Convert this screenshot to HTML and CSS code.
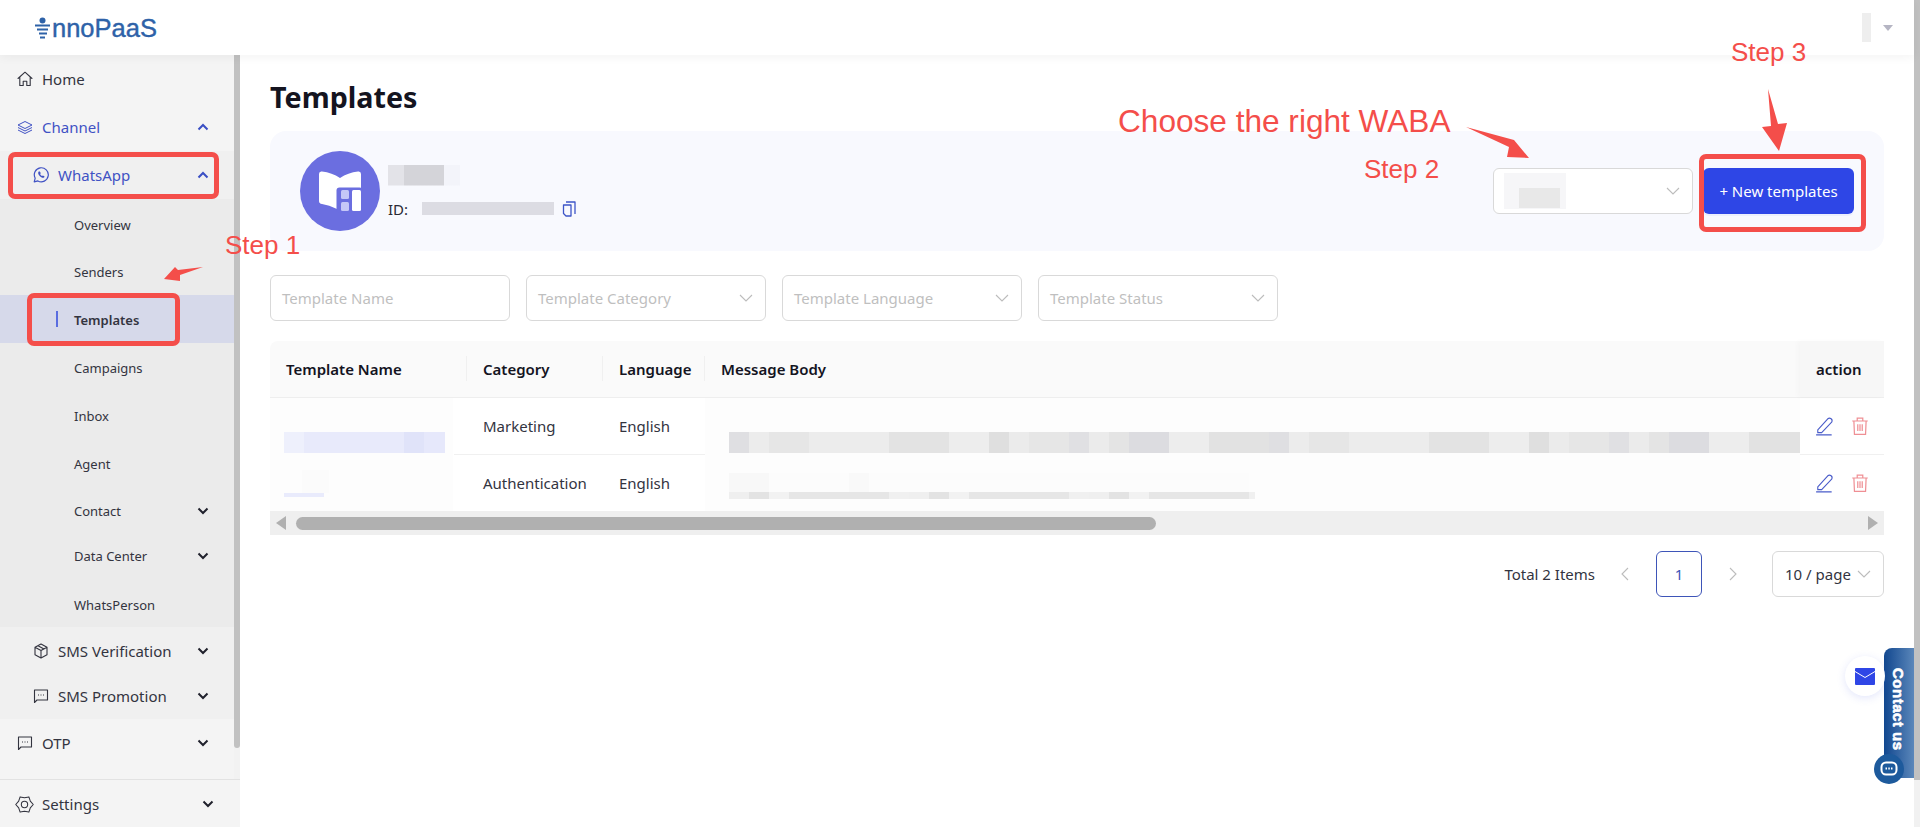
FILE: index.html
```html
<!DOCTYPE html>
<html lang="en">
<head>
<meta charset="utf-8">
<title>Templates</title>
<link rel="stylesheet" href="styles.css">
</head>
<body>
<div class="app">
  <header class="topbar">
    <div class="logo">
      <svg class="logo-mark" width="16" height="24" viewBox="0 0 16 24"><circle cx="7.500" cy="3.500" r="3" fill="#2e62a8"/><path d="M0 8.500h15M2 12.500h11M4 16.500h8M5 20.500h5" stroke="#2e62a8" stroke-width="2" fill="none"/></svg>
      <span class="logo-text">nnoPaaS</span>
    </div>
    <div class="user">
      <span class="user-blur"></span>
      <span class="caret"></span>
    </div>
  </header>
  <div class="below">
    <aside class="side">
      <div class="side-scroll">
        <nav class="menu">
          <a class="item">
            <svg class="ico" viewBox="0 0 16 16"><path d="M1 7.500 8 1.200l7 6.300M2.800 6.200v8.300h3.400v-4.300h3.600v4.300h3.400V6.200" fill="none" stroke="currentColor" stroke-width="1.100" stroke-linejoin="round" stroke-linecap="round"/></svg>
            <span>Home</span>
          </a>
          <a class="item blue">
            <svg class="ico" viewBox="0 0 16 16"><path d="M8 2.500 15 6 8 9.500 1 6z M1 8.500 8 12l7-3.500M1 11l7 3.500 7-3.500" fill="none" stroke="currentColor" stroke-width="1" stroke-linejoin="round"/></svg>
            <span>Channel</span>
            <svg class="chev up" viewBox="0 0 12 8"><path d="M1.500 6.500 6 2l4.500 4.500"/></svg>
          </a>
          <div class="group">
            <a class="item lvl2 blue">
              <svg class="ico" viewBox="0 0 16 16"><path d="M1.200 14.800 2.200 11.200A7 7 0 1 1 4.900 13.900z" fill="none" stroke="currentColor" stroke-width="1.200" stroke-linejoin="round"/><path d="M5.700 4.600c-1 1 -.6 2.800 1 4.500 1.700 1.700 3.500 2.300 4.600 1.200l.3-.9-1.700-1-.8.700c-.8-.3-1.600-1.100-2-2l.7-.8-.9-1.800z" fill="currentColor"/></svg>
              <span>WhatsApp</span>
              <svg class="chev up" viewBox="0 0 12 8"><path d="M1.500 6.500 6 2l4.500 4.500"/></svg>
            </a>
            <div class="subs">
              <a class="sub">Overview</a>
              <a class="sub senders">Senders</a>
              <a class="sub active">Templates</a>
              <a class="sub">Campaigns</a>
              <a class="sub">Inbox</a>
              <a class="sub">Agent</a>
              <a class="sub contact">Contact<svg class="chev" viewBox="0 0 12 8"><path d="M1.500 1.500 6 6l4.500-4.500"/></svg></a>
              <a class="sub data">Data Center<svg class="chev" viewBox="0 0 12 8"><path d="M1.500 1.500 6 6l4.500-4.500"/></svg></a>
              <a class="sub person">WhatsPerson</a>
            </div>
            <a class="item lvl2">
              <svg class="ico" viewBox="0 0 16 16"><path d="M8 1 14 4.300v7.400L8 15 2 11.700V4.300z M2 4.300 8 7.500l6-3.200M8 7.500V15M5 2.700l6 3.300" fill="none" stroke="currentColor" stroke-width="1.100" stroke-linejoin="round"/></svg>
              <span>SMS Verification</span>
              <svg class="chev" viewBox="0 0 12 8"><path d="M1.500 1.500 6 6l4.500-4.500"/></svg>
            </a>
            <a class="item lvl2 short">
              <svg class="ico" viewBox="0 0 16 16"><path d="M1.500 2h13v10H4l-2.500 2.500z" fill="none" stroke="currentColor" stroke-width="1.100" stroke-linejoin="round"/><path d="M5 7h1M7.500 7h1M10 7h1" stroke="currentColor" stroke-width="1.200"/></svg>
              <span>SMS Promotion</span>
              <svg class="chev" viewBox="0 0 12 8"><path d="M1.500 1.500 6 6l4.500-4.500"/></svg>
            </a>
          </div>
          <a class="item">
            <svg class="ico" viewBox="0 0 16 16"><path d="M1.500 2h13v10H4l-2.500 2.500z" fill="none" stroke="currentColor" stroke-width="1.100" stroke-linejoin="round"/><path d="M5 7h1M7.500 7h1M10 7h1" stroke="currentColor" stroke-width="1.200"/></svg>
            <span>OTP</span>
            <svg class="chev" viewBox="0 0 12 8"><path d="M1.500 1.500 6 6l4.500-4.500"/></svg>
          </a>
        </nav>
        <div class="side-bar"><div class="side-thumb"></div></div>
      </div>
      <a class="item settings">
        <svg class="ico gear" viewBox="0 0 18 18"><path d="M17.300 9 14.500 12.200 13.150 16.200 9 15.400 4.850 16.200 3.500 12.200.7 9 3.500 5.800 4.850 1.800 9 2.600 13.150 1.800 14.500 5.800z" fill="none" stroke="currentColor" stroke-width="1" stroke-linejoin="round"/><circle cx="9" cy="9" r="3" fill="none" stroke="currentColor" stroke-width="1"/></svg>
        <span>Settings</span>
        <svg class="chev" viewBox="0 0 12 8"><path d="M1.500 1.500 6 6l4.500-4.500"/></svg>
      </a>
    </aside>
    <main class="main">
      <h1 class="title">Templates</h1>
      <section class="card">
        <svg class="avatar" width="80" height="80" viewBox="0 0 80 80">
          <circle cx="40" cy="40" r="40" fill="#6b6ee0"/>
          <path d="M19 23q0-3 3-2.500 10 1 18 6.500 8-5.500 18-6.500 3-.5 3 2.500v35H37q-8-4-15-5-3-.5-3-3z" fill="#fff"/>
          <rect x="36.500" y="36.500" width="26" height="25" rx="3" fill="#6b6ee0"/>
          <rect x="41" y="39" width="8" height="9" rx="1.500" fill="#c5c7f7"/>
          <rect x="41" y="51" width="8" height="9" rx="1.500" fill="#c5c7f7"/>
          <rect x="52" y="39" width="9" height="21" rx="1.500" fill="#fff"/>
        </svg>
        <div class="acct">
          <div class="acct-name"></div>
          <div class="acct-id">
            <span>ID:</span>
            <span class="id-blur"></span>
            <svg class="copy" width="14" height="16" viewBox="0 0 14 16"><path d="M4 1h9v12M1.500 4h7.500v11H4l-2.500-2.500z" fill="none" stroke="#3d55c8" stroke-width="1.300" stroke-linejoin="round"/></svg>
          </div>
        </div>
        <div class="waba">
          <span class="waba-blur"><i></i></span>
          <svg class="thin" viewBox="0 0 14 8"><path d="M1 1l6 6 6-6"/></svg>
        </div>
        <button class="primary">+ New templates</button>
      </section>
      <div class="filters">
        <div class="field">Template Name</div>
        <div class="field">Template Category<svg class="thin" viewBox="0 0 14 8"><path d="M1 1l6 6 6-6"/></svg></div>
        <div class="field">Template Language<svg class="thin" viewBox="0 0 14 8"><path d="M1 1l6 6 6-6"/></svg></div>
        <div class="field">Template Status<svg class="thin" viewBox="0 0 14 8"><path d="M1 1l6 6 6-6"/></svg></div>
      </div>
      <section class="table">
        <div class="thead">
          <div class="th sep">Template Name</div>
          <div class="th sep">Category</div>
          <div class="th sep">Language</div>
          <div class="th">Message Body</div>
          <div class="th act">action</div>
        </div>
        <div class="trow">
          <div class="td name one"><span class="blur-name"></span></div>
          <div class="td line">Marketing</div>
          <div class="td line">English</div>
          <div class="td body one"><span class="blur-msg"></span></div>
          <div class="td tools line">
            <svg class="tool" viewBox="0 0 18 18"><path d="M2.500 12.500 11.500 2.500q1.500-1.200 3 0t.5 3L6 15H2.500zM1 17h14" fill="none" stroke="#4a5cc9" stroke-width="1" stroke-linejoin="round"/></svg>
            <svg class="tool" viewBox="0 0 18 18"><path d="M2 4.500h14M6.500 4.500V2h5v2.500M3.500 4.500l.5 12h10l.5-12M7 7.500v6M9 7.500v6M11 7.500v6" fill="none" stroke="#ef8f94" stroke-width="1.100"/></svg>
          </div>
        </div>
        <div class="trow">
          <div class="td name two"><span class="faint-name"></span><span class="band-name"></span></div>
          <div class="td">Authentication</div>
          <div class="td">English</div>
          <div class="td body two"><span class="faint-msg"></span><span class="band-msg"></span></div>
          <div class="td tools">
            <svg class="tool" viewBox="0 0 18 18"><path d="M2.500 12.500 11.500 2.500q1.500-1.200 3 0t.5 3L6 15H2.500zM1 17h14" fill="none" stroke="#4a5cc9" stroke-width="1" stroke-linejoin="round"/></svg>
            <svg class="tool" viewBox="0 0 18 18"><path d="M2 4.500h14M6.500 4.500V2h5v2.500M3.500 4.500l.5 12h10l.5-12M7 7.500v6M9 7.500v6M11 7.500v6" fill="none" stroke="#ef8f94" stroke-width="1.100"/></svg>
          </div>
        </div>
        <div class="hscroll">
          <span class="tri left"></span>
          <span class="hthumb"></span>
          <span class="tri right"></span>
        </div>
      </section>
      <div class="pager">
        <span class="total">Total 2 Items</span>
        <svg class="pg-arrow" viewBox="0 0 8 14"><path d="M7 1 1 7l6 6"/></svg>
        <span class="page-no">1</span>
        <svg class="pg-arrow" viewBox="0 0 8 14"><path d="M1 1l6 6-6 6"/></svg>
        <span class="size">10 / page<svg class="thin" viewBox="0 0 14 8"><path d="M1 1l6 6 6-6"/></svg></span>
      </div>
    </main>
  </div>
  <div class="mail-float">
    <svg width="20" height="17" viewBox="0 0 20 17"><rect width="20" height="17" rx="1" fill="#2f46e6"/><path d="M0 3.500 10 9.500l10-6" fill="none" stroke="#fff" stroke-width="1"/></svg>
  </div>
  <div class="contact-tab">Contact us</div>
  <div class="chat-float">
    <svg width="18" height="16" viewBox="0 0 18 16"><rect x="1.500" y="1.500" width="15" height="12" rx="4.500" fill="none" stroke="#fff" stroke-width="2"/><path d="M5.500 7.500h1.500M8.300 7.500h1.500M11 7.500h1.500" stroke="#fff" stroke-width="2"/></svg>
  </div>
  <div class="note-box box-a"></div>
  <div class="note-box box-b"></div>
  <div class="note-box box-c"></div>
  <svg class="arrows" width="1914" height="300" viewBox="0 0 1914 300">
    <path d="M164 279 175 267 178 270 203 267 180 275 180 281z"/>
    <path d="M1466 127 1514 140 1529 158 1507 157 1509 147z"/>
    <path d="M1768 89 1778 124 1787 123 1779 151 1762 127 1771 126z"/>
  </svg>
  <span class="note n1">Step 1</span>
  <span class="note n2">Step 2</span>
  <span class="note n3">Step 3</span>
  <span class="note n4">Choose the right WABA</span>
</div>
<div class="page-bar"><div class="page-thumb"></div></div>
</body>
</html>
```

FILE: styles.css
```css
* { box-sizing: border-box; }
html, body { margin: 0; height: 100%; }
body {
  display: flex;
  height: 827px;
  overflow: hidden;
  background: #fff;
  color: #33343f;
  font: 15px/20px "Noto Sans", Inter, sans-serif;
}
.app { position: relative; flex: 1; min-width: 0; display: flex; flex-direction: column; }
.page-bar { width: 6px; background: #f1f1f1; }
.page-thumb { height: 780px; background: #c1c1c1; }

.topbar {
  height: 55px;
  flex: none;
  display: flex;
  align-items: center;
  justify-content: space-between;
  padding: 0 21px 0 35px;
  background: #fff;
  box-shadow: 0 2px 10px rgba(0,0,0,.05);
  position: relative;
  z-index: 2;
}
.logo { display: flex; align-items: center; gap: 1px; }
.logo-mark { margin-top: 3px; }
.logo-text {
  font: 25.500px/30px "Liberation Sans", sans-serif;
  color: #2e62a8;
  -webkit-text-stroke: .4px #2e62a8;
}
.user { display: flex; align-items: center; gap: 12px; }
.user-blur { width: 23px; height: 29px; background: linear-gradient(90deg, #fff 0 60%, #eeeeee 60% 100%); }
.caret { width: 0; height: 0; border: 5px solid transparent; border-top: 6px solid #b5b5c3; border-bottom: 0; }

.below { flex: 1; display: flex; min-height: 0; }
.side { width: 240px; flex: none; display: flex; flex-direction: column; background: #f4f4f4; }
.side-scroll { flex: 1; display: flex; min-height: 0; }
.menu { flex: 1; min-width: 0; }
.side-bar { width: 6px; background: #f2f2f2; }
.side-thumb { height: 693px; background: #c1c1c1; border-radius: 0 0 3px 3px; }

.item {
  height: 48px;
  display: flex;
  align-items: center;
  padding: 0 25px 0 17px;
  gap: 9px;
  color: #33343f;
}
.item span { flex: 1; }
.blue { color: #4052c4; }
.ico { width: 16px; height: 16px; flex: none; }
.chev { width: 12px; height: 8px; flex: none; fill: none; stroke: #20212c; stroke-width: 2; }
.chev.up { stroke: #3a4fc4; }
.group { background: #f0f0f0; }
.lvl2 { padding-left: 33px; }
.short { height: 44px; padding-bottom: 3px; }
.subs { background: #ebebeb; padding-top: 1px; }
.sub {
  height: 48px;
  display: flex;
  align-items: center;
  justify-content: space-between;
  padding: 1px 25px 0 74px;
  font-size: 13px;
  color: #33343f;
}
.senders { height: 47px; }
.active {
  position: relative;
  background: #d6d9ea;
  font-weight: 600;
}
.active::before {
  content: "";
  position: absolute;
  left: 56px;
  top: 16px;
  width: 2px;
  height: 16px;
  background: #5a6de0;
}
.contact { height: 46px; }
.data { height: 44px; }
.person { height: 50px; padding-top: 5px; }
.settings { height: 48px; border-top: 1px solid #e2e2e2; padding: 1px 26px 0 15px; gap: 8px; }
.gear { width: 19px; height: 19px; }

.main { flex: 1; min-width: 0; padding: 0 30px; }
.title { margin: 25px 0 0; font-size: 28.700px; line-height: 34px; font-weight: 700; color: #14141f; height: 51px; }
.card {
  height: 120px;
  display: flex;
  align-items: center;
  padding: 0 30px;
  background: #f8f9fe;
  border-radius: 16px;
}
.avatar { flex: none; }
.acct { margin-left: 8px; flex: 1; }
.acct-name {
  width: 72px;
  height: 29px;
  margin-bottom: 6px;
  background: linear-gradient(90deg, #e3e3e8 0 16px, #d4d4d9 16px 56px, #f3f4fa 56px 72px);
  clip-path: inset(0 0 8px 0);
}
.acct-id { display: flex; align-items: center; color: #2a2a35; height: 18px; }
.id-blur { width: 132px; height: 13px; margin-left: 14px; background: #dcdce3; }
.copy { margin-left: 8px; }
.waba {
  width: 200px;
  height: 46px;
  display: flex;
  align-items: center;
  justify-content: space-between;
  padding: 0 12px 0 10px;
  background: #fff;
  border: 1px solid #d9d9d9;
  border-radius: 6px;
}
.waba-blur { width: 62px; height: 36px; padding: 15px 6px 0 15px; background: #f6f6f8; }
.waba-blur i { display: block; height: 20px; background: #e8e8e8; }
.thin { width: 14px; height: 8px; flex: none; fill: none; stroke: #bcbcbc; stroke-width: 1.100; }
.primary {
  width: 151px;
  height: 46px;
  margin-left: 10px;
  border: 0;
  border-radius: 6px;
  background: #2e46e6;
  color: #fff;
  font: 15px "Noto Sans", Inter, sans-serif;
  box-shadow: 0 2px 0 #eceffd;
}

.filters { display: flex; gap: 16px; margin-top: 24px; }
.field {
  width: 240px;
  height: 46px;
  display: flex;
  align-items: center;
  justify-content: space-between;
  padding: 0 12px 0 11px;
  border: 1px solid #d9d9d9;
  border-radius: 6px;
  color: #bfbfbf;
}

.table { margin-top: 20px; }
.thead, .trow { display: grid; grid-template-columns: 197px 136px 102px 1095px 84px; }
.thead { height: 57px; background: #fafafa; border-bottom: 1px solid #eeeeee; border-radius: 8px 0 0 0; font-weight: 600; color: #14141f; }
.th { display: flex; align-items: center; padding-left: 16px; position: relative; }
.sep::after {
  content: "";
  position: absolute;
  right: 0;
  top: 15px;
  width: 1px;
  height: 25px;
  background: #f0f0f0;
}
.act { background: #f7f7f7; box-shadow: -3px 0 5px rgba(0,0,0,.02); }
.trow { height: 56.500px; }
.td { display: flex; align-items: center; padding-left: 16px; }
.line { border-bottom: 1px solid #f0f0f0; }
.name, .body { display: block; padding-left: 0; background-color: #fdfdfd; }
.name { background: linear-gradient(90deg, #fdfdfd 183px, #fff 183px); }
.name.one {
  padding: 34px 0 0 14px;
  background:
    linear-gradient(#f0f0f0, #f0f0f0) right bottom / 13px 1px no-repeat,
    linear-gradient(90deg, #fdfdfd 183px, #fff 183px);
}
.name.two { padding: 15px 0 0 14px; }
.blur-name {
  display: block;
  width: 161px;
  height: 21px;
  background: linear-gradient(90deg, #eef0fc 0 20px, #e8eafb 20px 120px, #e0e3f9 120px 140px, #e6e8fb 140px 161px);
}
.faint-name { display: block; width: 27px; height: 23px; margin-left: 18px; background: #fbfbfb; }
.band-name { display: block; width: 40px; height: 4px; background: #e9ebfc; }
.body.one { padding: 34px 0 0 24px; }
.body.two { padding: 18px 0 0 24px; }
.blur-msg {
  display: block;
  height: 21px;
  background: repeating-linear-gradient(90deg,
    #dfdfe2 0 20px, #ececec 20px 40px, #e6e6e6 40px 80px, #ececec 80px 160px,
    #e3e3e3 160px 220px, #ededed 220px 260px, #dfdfdf 260px 280px, #ebebeb 280px 300px,
    #e6e6e6 300px 340px, #e0e0e3 340px 360px, #ebebeb 360px 380px, #e4e4e4 380px 400px,
    #dcdce0 400px 440px, #ededed 440px 480px, #e2e2e2 480px 540px);
}
.faint-msg {
  display: block;
  height: 19px;
  background: linear-gradient(90deg, #f8f8f8 0 40px, #fcfcfc 40px 120px, #f9f9f9 120px 140px, #fcfcfc 140px 520px);
  width: 520px;
}
.band-msg {
  display: block;
  width: 526px;
  height: 7px;
  background: repeating-linear-gradient(90deg, #efefef 0 20px, #e3e3e3 20px 40px, #f2f2f2 40px 60px, #e6e6e6 60px 160px, #f0f0f0 160px 180px);
}
.tools { padding: 0 0 0 15px; gap: 15px; background: #fff; }
.tool { width: 20px; height: 20px; flex: none; }
.hscroll {
  height: 24px;
  display: flex;
  align-items: center;
  padding: 0 6px;
  background: #efefef;
}
.tri { width: 0; height: 0; border: 7px solid transparent; }
.tri.left { border-left: 0; border-right: 10px solid #b0b0b0; }
.tri.right { border-right: 0; border-left: 10px solid #b0b0b0; }
.hthumb { width: 860px; height: 13px; margin: 0 auto 0 10px; border-radius: 7px; background: #b0b0b0; }

.pager { display: flex; align-items: center; justify-content: flex-end; margin-top: 16px; height: 46px; }
.total { margin-right: 26px; }
.pg-arrow { width: 8px; height: 14px; flex: none; fill: none; stroke: #bcbcbc; stroke-width: 1.100; }
.page-no {
  width: 46px;
  height: 46px;
  margin: 0 27px;
  display: flex;
  align-items: center;
  justify-content: center;
  border: 1px solid #3e55b8;
  border-radius: 6px;
  color: #3e55b8;
}
.size {
  width: 112px;
  height: 46px;
  margin-left: 35px;
  display: flex;
  align-items: center;
  justify-content: space-between;
  padding: 0 12px;
  border: 1px solid #d9d9d9;
  border-radius: 6px;
}

.mail-float {
  position: absolute;
  left: 1845px;
  top: 656px;
  width: 40px;
  height: 40px;
  display: flex;
  align-items: center;
  justify-content: center;
  border-radius: 50%;
  background: #fff;
  box-shadow: 0 2px 8px rgba(70,90,230,.15);
  z-index: 3;
}
.contact-tab {
  position: absolute;
  left: 1884px;
  top: 648px;
  width: 30px;
  height: 130px;
  padding: 20px 7px 0 0;
  border-radius: 8px 0 0 8px;
  background: linear-gradient(90deg, #11478f, #5b87ba);
  color: #fff;
  font: 700 15px/18px "Liberation Sans", sans-serif;
  -webkit-text-stroke: .6px #fff;
  letter-spacing: .5px;
  writing-mode: vertical-rl;
}
.chat-float {
  position: absolute;
  left: 1874px;
  top: 754px;
  width: 30px;
  height: 30px;
  display: flex;
  align-items: center;
  justify-content: center;
  border-radius: 50%;
  background: #1d5a9c;
}
.note-box { position: absolute; border: 5px solid #f44e4a; border-radius: 7px; z-index: 4; }
.box-a { left: 8px; top: 152px; width: 211px; height: 47px; }
.box-b { left: 27px; top: 293px; width: 153px; height: 53px; }
.box-c { left: 1699px; top: 154px; width: 167px; height: 78px; }
.arrows { position: absolute; left: 0; top: 0; fill: #f44e4a; pointer-events: none; z-index: 4; }
.note { position: absolute; font: 26px/30px "Liberation Sans", sans-serif; color: #f44e4a; white-space: nowrap; z-index: 4; }
.n1 { left: 225px; top: 230px; }
.n2 { left: 1364px; top: 154px; }
.n3 { left: 1731px; top: 37px; }
.n4 { left: 1118px; top: 105px; font-size: 31.600px; line-height: 32px; }
```
